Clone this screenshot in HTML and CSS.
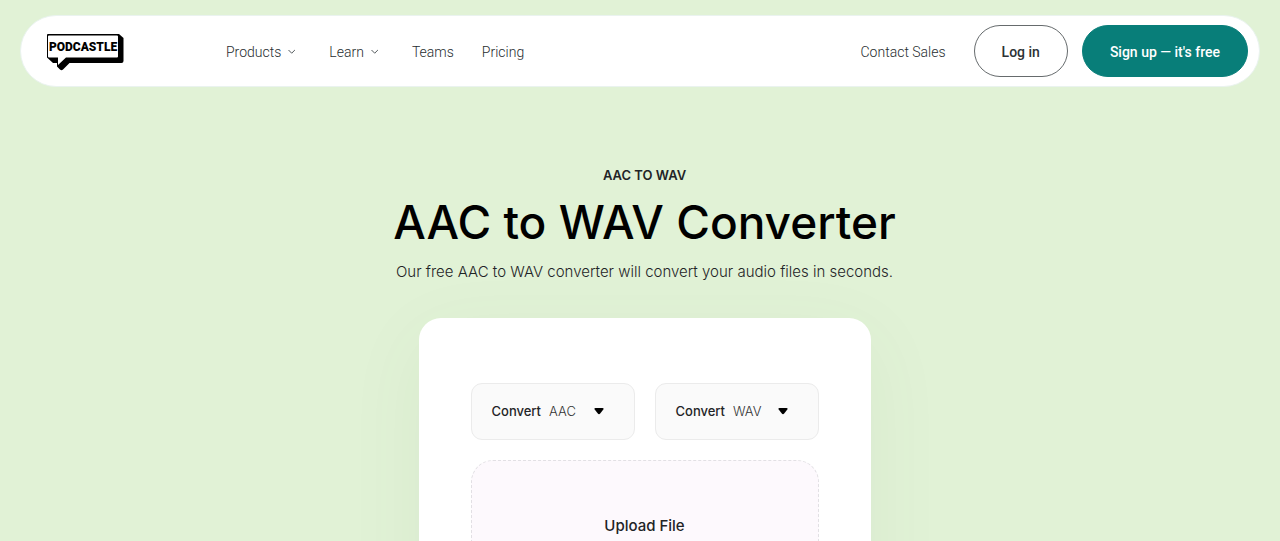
FILE: index.html
```html
<!DOCTYPE html>
<html lang="en">
<head>
<meta charset="utf-8">
<meta name="viewport" content="width=device-width, initial-scale=1">
<title>AAC to WAV Converter</title>
<link rel="stylesheet" href="styles.css">
</head>
<body>
<header class="header">
  <a class="logo" href="#" aria-label="Podcastle">
    <svg width="78" height="40" viewBox="0 -3 78 40" aria-hidden="true">
      <path d="M2 0H73L77.500 4V27Q77.500 29 75.500 29H23.500L17 35.500Q15.500 37 14 35.500L11 32.500V29H7L1 23.500V1Q1 0 2 0Z"/>
      <path fill="#fff" d="M3 1.500H71Q72 1.500 72 2.500V22.500Q72 23.500 71 23.500H20L12 31V23.500H3Q2 23.500 2 22.500V2.500Q2 1.500 3 1.500Z"/>
      <text class="logo-text" x="37" y="17" text-anchor="middle">PODCASTLE</text>
    </svg>
  </a>
  <nav class="nav">
    <a class="nav-link" href="#">Products
      <svg class="chevron" width="16" height="16" viewBox="0 0 16 16" aria-hidden="true"><path d="M3.500 6L6.700 9.200L9.900 6"/></svg>
    </a>
    <a class="nav-link" href="#">Learn
      <svg class="chevron" width="16" height="16" viewBox="0 0 16 16" aria-hidden="true"><path d="M3.500 6L6.700 9.200L9.900 6"/></svg>
    </a>
    <a class="nav-link" href="#">Teams</a>
    <a class="nav-link" href="#">Pricing</a>
  </nav>
  <div class="actions">
    <a class="nav-link contact" href="#">Contact Sales</a>
    <button class="btn btn-outline" type="button">Log in</button>
    <button class="btn btn-primary" type="button">Sign up — it's free</button>
  </div>
</header>
<main class="main">
  <p class="eyebrow">AAC TO WAV</p>
  <h1 class="title">AAC to WAV Converter</h1>
  <p class="lead">Our free AAC to WAV converter will convert your audio files in seconds.</p>
  <section class="card">
    <div class="formats">
      <div class="format">
        <label class="format-label" for="from">Convert</label>
        <select class="format-select" id="from"><option>AAC</option></select>
        <svg class="caret" width="10" height="8" viewBox="0 0 10 8" aria-hidden="true"><path d="M1.500 1H8.500Q10.200 1 9.300 2.500L6.200 6.500Q5 7.800 3.800 6.500L.7 2.500Q-.2 1 1.500 1Z"/></svg>
      </div>
      <div class="format">
        <label class="format-label" for="to">Convert</label>
        <select class="format-select" id="to"><option>WAV</option></select>
        <svg class="caret" width="10" height="8" viewBox="0 0 10 8" aria-hidden="true"><path d="M1.500 1H8.500Q10.200 1 9.300 2.500L6.200 6.500Q5 7.800 3.800 6.500L.7 2.500Q-.2 1 1.500 1Z"/></svg>
      </div>
    </div>
    <button class="upload" type="button">Upload File</button>
  </section>
</main>
</body>
</html>
```
FILE: styles.css
```css
* {
  box-sizing: border-box;
}

html {
  background: #e1f2d6;
}

body {
  margin: 0;
  padding-top: 15px;
  height: 100vh;
  overflow: hidden;
  font-family: Inter, "Liberation Sans", sans-serif;
  font-size: 14px;
  color: #1f2427;
}

.header {
  display: flex;
  align-items: center;
  margin: 0 20px;
  padding: 9px 11px 9px 25px;
  border: 1px solid #eaf3ef;
  border-radius: 36px;
  background: #fff;
}

.logo {
  display: flex;
  margin-right: 102px;
}

.logo-text {
  font: 900 12px Roboto, "Liberation Sans", sans-serif;
}

.nav {
  display: flex;
  gap: 28px;
}

.nav-link {
  display: flex;
  align-items: center;
  gap: 4px;
  padding-top: 2px;
  font-family: Roboto, "Liberation Sans", sans-serif;
  font-weight: 300;
  color: #272d30;
  text-decoration: none;
}

.chevron {
  fill: none;
  stroke: #53595c;
  stroke-width: 1;
}

.actions {
  display: flex;
  align-items: center;
  gap: 14px;
  margin-left: auto;
}

.contact {
  margin-right: 14px;
}

.btn {
  height: 52px;
  padding: 2px 27px 0;
  border: 1px solid #666b6d;
  border-radius: 26px;
  background: #fff;
  font: 500 14px Roboto, "Liberation Sans", sans-serif;
  color: #2c3235;
}

.btn-primary {
  border-color: #087e79;
  background: #087e79;
  color: #fff;
}

.main {
  display: flex;
  flex-direction: column;
  align-items: center;
  padding: 78px 0 0 9px;
  text-align: center;
}

.eyebrow {
  margin: 0;
  font-size: 13px;
  font-weight: 600;
  line-height: 20px;
}

.title {
  margin: 7px 0 9px;
  font-size: 46px;
  font-weight: 500;
  line-height: 60px;
  color: #000;
}

.lead {
  margin: 0;
  font-size: 15px;
  font-weight: 300;
  line-height: 22px;
}

.card {
  width: 100%;
  max-width: 452px;
  margin-top: 35px;
  padding: 65px 52px;
  border-radius: 22px;
  background: #fff;
  box-shadow: 0 20px 80px rgba(90, 110, 90, 0.06);
}

.formats {
  display: grid;
  grid-template-columns: 1fr 1fr;
  gap: 20px;
}

.format {
  display: flex;
  align-items: center;
  height: 57px;
  padding: 0 0 2px 20px;
  border: 1px solid #ebebeb;
  border-radius: 11px;
  background: #fafafa;
}

.format-label {
  margin-right: 8px;
  font-size: 13px;
  font-weight: 500;
}

.format-select {
  width: 45px;
  padding: 0;
  border: 0;
  appearance: none;
  background: none;
  font: 300 13px Inter, "Liberation Sans", sans-serif;
  color: #333;
}

.upload {
  display: block;
  width: 100%;
  margin-top: 20px;
  padding: 53px 20px;
  border: 1px dashed #e2e0e4;
  border-radius: 22px;
  background: #fdf9fd;
  font: 500 15px/24px Inter, "Liberation Sans", sans-serif;
  color: #1f2427;
}
```
